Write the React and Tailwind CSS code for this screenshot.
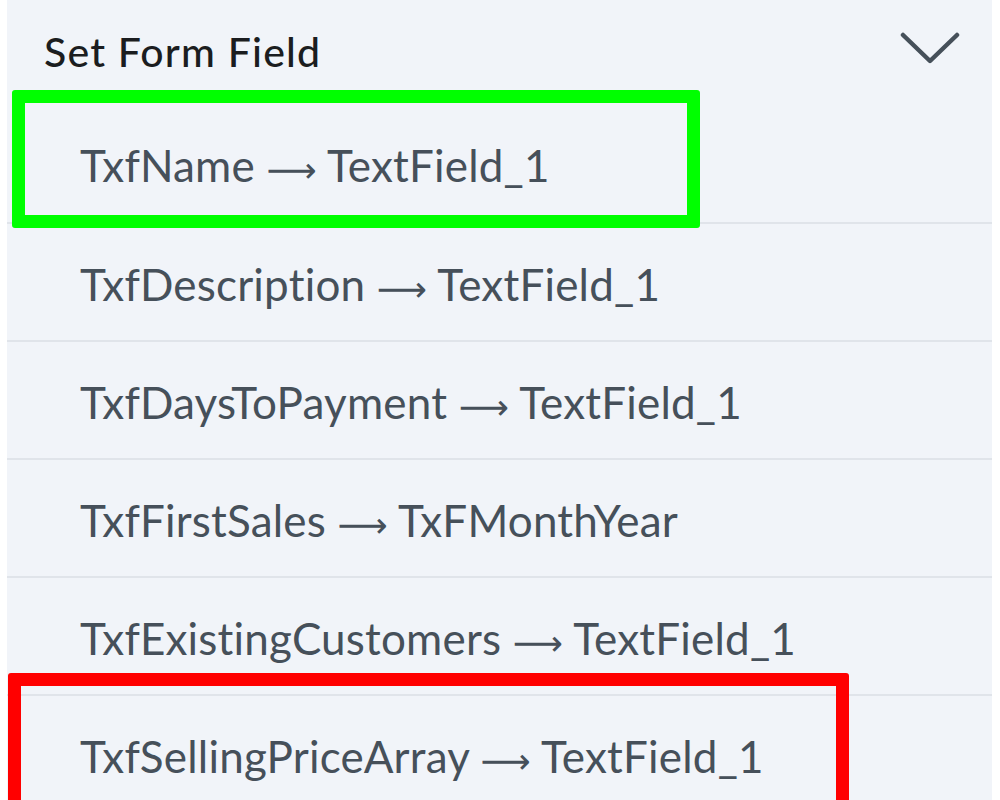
const rows = [
  ["TxfName", "TextField_1"],
  ["TxfDescription", "TextField_1"],
  ["TxfDaysToPayment", "TextField_1"],
  ["TxfFirstSales", "TxFMonthYear"],
  ["TxfExistingCustomers", "TextField_1"],
  ["TxfSellingPriceArray", "TextField_1"],
];

export default function App() {
  return (
    <div className="relative h-[800px] w-[1000px] overflow-hidden bg-white pl-[7px] pr-[8px]" style={{ fontFamily: "Lato, 'Noto Sans', sans-serif" }}>
      <div className="h-full bg-[#f1f4f9]">
        <div className="flex h-[104px] items-center justify-between pl-[37px] pr-[32px]">
          <span className="text-[41px] font-medium tracking-[1.2px] text-[#1b1d20]">Set Form Field</span>
          <svg width="60" height="36" viewBox="0 0 60 36" fill="none" className="mt-[-6px]">
            <path d="M3 4 L30 30 L57 4" stroke="#46505a" strokeWidth="4.5" strokeLinecap="round" strokeLinejoin="round" />
          </svg>
        </div>
        {rows.map(([a, b], i) => (
          <div key={a} className={`flex h-[118px] items-center pl-[73px] ${i > 0 ? "border-t-2 border-[#e0e4ea]" : ""}`}>
            <span className="mt-[4px] text-[44px] tracking-[0.2px] text-[#46505a]">
              {a}{" "}
              <span className="text-[35px]" style={{ fontFamily: "'DejaVu Sans', sans-serif" }}>⟶</span>{" "}
              {b}
            </span>
          </div>
        ))}
      </div>
      <div className="absolute left-[12px] top-[90px] h-[138px] w-[688px] rounded-[3px] border-[13px] border-[#00ff00]" />
      <div className="absolute left-[8px] top-[673px] h-[140px] w-[841px] rounded-[3px] border-[13px] border-[#ff0000]" />
    </div>
  );
}
